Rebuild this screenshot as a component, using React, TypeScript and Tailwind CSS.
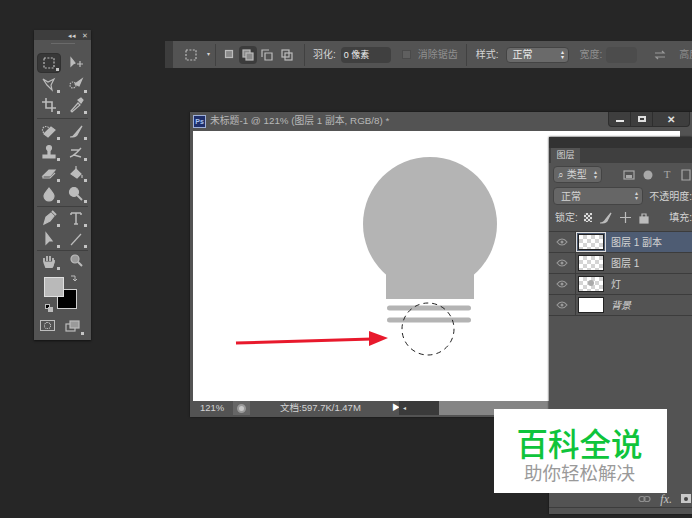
import type { ReactNode } from "react"

const cjk = "font-['Liberation_Sans','Noto_Sans_CJK_SC',sans-serif]"

const Ico = ({ children, w = 16, h = 16 }: { children: ReactNode; w?: number; h?: number }) => (
  <svg width={w} height={h} viewBox={`0 0 ${w} ${h}`} fill="none" stroke="#bcbcbc" strokeWidth="1.2">
    {children}
  </svg>
)

// one cell of the tool palette, corner = the little flyout triangle
const Tool = ({ children, active, corner = true }: { children: ReactNode; active?: boolean; corner?: boolean }) => (
  <div className={`relative w-[24px] h-[20px] flex items-center justify-center rounded-sm ${active ? "bg-[#383838] border border-[#303030]" : ""}`}>
    <Ico>{children}</Ico>
    {corner && <div className="absolute right-[1px] bottom-[1px] w-[3px] h-[3px] bg-[#c4c4c4]" />}
  </div>
)

const Row = ({ children }: { children: ReactNode }) => (
  <div className="flex justify-between px-[3px] mb-[1px]">{children}</div>
)

const Toolbox = () => (
  <div className="absolute left-[34px] top-[30px] w-[57px] h-[310px] bg-[#535353] shadow-[0_1px_2px_#111] flex flex-col">
    <div className="h-[10px] bg-[#3d3d3d] flex justify-end items-center gap-[6px] pr-[3px] text-[#cfcfcf] text-[7px] leading-none">
      <span>◂◂</span>
      <span>✕</span>
    </div>
    <div className="h-px w-[24px] bg-[#6a6a6a] mx-auto mt-[3px] mb-[9px]" />
    <Row>
      <Tool active><rect x="3" y="3" width="10" height="10" strokeDasharray="2 1.4" /></Tool>
      <Tool corner={false}><path d="M3 3v8l2-2 2-1z" fill="#bcbcbc" /><path d="M9 9h6M12 6v6" /></Tool>
    </Row>
    <Row>
      <Tool><path d="M2 3l5 3 6-3-3 6 1 5-5-5z" /></Tool>
      <Tool><circle cx="5" cy="9" r="3" strokeDasharray="1.5 1" /><path d="M7 8l7-5-3 7z" fill="#bcbcbc" /></Tool>
    </Row>
    <Row>
      <Tool><path d="M5 1v10h10M1 5h10v10" strokeWidth="1.6" /></Tool>
      <Tool><path d="M3 14l7-8 2 2-8 7z" /><path d="M10 3l3 3 2-3-2-2z" fill="#bcbcbc" /></Tool>
    </Row>
    <div className="h-px bg-[#3f3f3f] mx-[3px] my-[2px]" />
    <Row>
      <Tool><path d="M3 11l7-7 4 3-7 7z" fill="#bcbcbc" /><circle cx="5" cy="7" r="3.5" strokeDasharray="1.5 1" /></Tool>
      <Tool><path d="M2 14c3 0 4-1 5-3l7-8-5 9c-2 2-4 2-7 2z" fill="#bcbcbc" /></Tool>
    </Row>
    <Row>
      <Tool><circle cx="8" cy="4" r="2.5" fill="#bcbcbc" /><path d="M7 6h2v4H7zM2 11h12v3H2z" fill="#bcbcbc" /></Tool>
      <Tool><path d="M2 13c3-1 5-2 11-9M3 6h8M6 11l7 2" strokeWidth="1.4" /></Tool>
    </Row>
    <Row>
      <Tool><path d="M2 11l6-6h6l-5 6z" fill="#bcbcbc" /><path d="M2 11v2h7l5-5" /></Tool>
      <Tool><path d="M3 9l5-5 5 5-4 4z" fill="#bcbcbc" /><path d="M8 4V1M14 10v3" /></Tool>
    </Row>
    <Row>
      <Tool><path d="M8 2c3 4 5 6 5 8a5 5 0 0 1-10 0c0-2 2-4 5-8z" fill="#bcbcbc" /></Tool>
      <Tool><circle cx="6" cy="6" r="4.5" fill="#bcbcbc" /><path d="M9 9l5 5" strokeWidth="2" /></Tool>
    </Row>
    <div className="h-px bg-[#3f3f3f] mx-[3px] my-[1px]" />
    <Row>
      <Tool><path d="M3 14l2-7 5-4 3 3-4 5z" fill="#bcbcbc" /><path d="M11 1l4 4" strokeWidth="2" /></Tool>
      <Tool><path d="M3 3h10M8 3v11M6 14h4M3 3v2M13 3v2" strokeWidth="1.5" /></Tool>
    </Row>
    <Row>
      <Tool><path d="M5 2v11l3-3 3 0z" fill="#bcbcbc" /></Tool>
      <Tool><path d="M3 14L13 3" /></Tool>
    </Row>
    <div className="h-px bg-[#3f3f3f] mx-[3px]" />
    <Row>
      <Tool><path d="M3 9V5M6 8V3M9 8V3M12 9V5M3 9l2 5h6l2-5V7" strokeWidth="1.8" /><path d="M4 9h8v4H5z" fill="#bcbcbc" /></Tool>
      <Tool corner={false}><circle cx="7" cy="6" r="4" fill="#9a9a9a" /><path d="M10 9l4 4" strokeWidth="2" /></Tool>
    </Row>
    <div className="relative h-[39px] shrink-0 ml-[10px] mt-[5px]">
      <div className="absolute left-[25px] top-[-3px]">
        <Ico w={10} h={10}><path d="M2 2h4v5M4 5l2 2 2-2" strokeWidth="1" /></Ico>
      </div>
      <div className="absolute left-[13px] top-[12px] w-[20px] h-[20px] bg-black border border-[#d0d0d0]" />
      <div className="absolute left-0 top-0 w-[20px] h-[20px] bg-[#b9b9b9] border border-[#e0e0e0]" />
      <div className="absolute left-[1px] top-[27px] w-[5px] h-[5px] bg-black border border-[#bbb]" />
      <div className="absolute left-[4px] top-[30px] w-[5px] h-[5px] bg-[#bbb]" />
    </div>
    <div className="flex justify-between px-[6px]">
      <div className="w-[15px] h-[11px] mt-[4px] border border-[#bdbdbd] flex items-center justify-center">
        <div className="w-[7px] h-[7px] rounded-full border border-dotted border-[#ddd]" />
      </div>
      <Tool><rect x="1" y="6" width="9" height="7" /><rect x="5" y="3" width="9" height="7" fill="#9a9a9a" /></Tool>
    </div>
  </div>
)

const OptionsBar = () => (
  <div className={`absolute left-[165px] top-[41px] w-[527px] h-[27px] flex overflow-hidden bg-[#535353] text-[10px] text-[#d4d4d4] ${cjk}`}>
    <div className="w-[8px] shrink-0 bg-[#3d3d3d]" />
    <div className="flex items-center flex-1 min-w-0 whitespace-nowrap [&>*]:shrink-0">
      <div className="ml-[12px]"><Ico w={12} h={12}><rect x="1" y="1" width="10" height="10" strokeDasharray="2 1.4" /></Ico></div>
      <span className="text-[6px] ml-[10px]">▾</span>
      <div className="w-px h-[22px] bg-[#414141] ml-[5px]" />
      <div className="ml-[8px]"><Ico w={11} h={11}><rect x="1.5" y="1.5" width="7" height="7" fill="#8a8a8a" /></Ico></div>
      <div className="ml-[4px] w-[18px] h-[18px] bg-[#3c3c3c] rounded-sm flex items-center justify-center">
        <Ico w={12} h={12}><rect x="1" y="1" width="7" height="7" fill="#8a8a8a" /><rect x="4" y="4" width="7" height="7" fill="#8a8a8a" /></Ico>
      </div>
      <div className="ml-[4px]"><Ico w={12} h={12}><path d="M1 8V1h7M4 4h7v7H4z" /></Ico></div>
      <div className="ml-[8px]"><Ico w={12} h={12}><rect x="1" y="1" width="7" height="7" /><rect x="4" y="4" width="7" height="7" /></Ico></div>
      <div className="w-px h-[22px] bg-[#414141] ml-[11px]" />
      <span className="ml-[8px]">羽化:</span>
      <div className="ml-[5px] w-[50px] h-[16px] bg-[#404040] rounded-sm px-[3px] leading-[16px] text-[9px] text-[#ececec]">0 像素</div>
      <div className="ml-[11px] w-[9px] h-[9px] bg-[#5f5f5f] border border-[#4a4a4a]" />
      <span className="ml-[7px] text-[#8f8f8f]">消除锯齿</span>
      <div className="w-px h-[22px] bg-[#414141] ml-[8px]" />
      <span className="ml-[9px]">样式:</span>
      <div className="ml-[7px] w-[63px] h-[16px] bg-[#6a6a6a] border border-[#444] rounded-sm pl-[6px] pr-[4px] flex justify-between items-center text-[#ececec]">
        <span>正常</span>
        <span className="text-[6px] leading-[5px] text-center">▴<br />▾</span>
      </div>
      <span className="ml-[11px] text-[#8f8f8f]">宽度:</span>
      <div className="ml-[4px] w-[31px] h-[16px] bg-[#4c4c4c] rounded-sm" />
      <div className="ml-[17px]"><Ico w={12} h={12}><path d="M1 4h9l-2-2M11 8H2l2 2" stroke="#9a9a9a" /></Ico></div>
      <span className="ml-[13px] text-[#8f8f8f]">高度:</span>
    </div>
  </div>
)

const DocWindow = () => (
  <div className={`absolute left-[190px] top-[112px] w-[502px] h-[305px] bg-[#535353] flex flex-col shadow-[0_0_2px_#111] ${cjk}`}>
    <div className="h-[19px] flex items-center pl-[3px] relative">
      <div className="w-[13px] h-[13px] bg-[#1f2f6b] border border-[#9fb0d8] text-[#a9c4f0] text-[7px] font-bold leading-[11px] text-center">Ps</div>
      <span className="ml-[4px] text-[9.8px] text-[#b8b8b8]">未标题-1 @ 121% (图层 1 副本, RGB/8) *</span>
      <div className="absolute right-[2px] top-0 h-[15px] flex bg-[#3e3e3e] border-x border-b border-[#2e2e2e] rounded-b-sm">
        <div className="w-[22px] flex items-center justify-center border-r border-[#2e2e2e]"><div className="w-[8px] h-[2px] mt-[4px] bg-[#e8e8e8]" /></div>
        <div className="w-[22px] flex items-center justify-center border-r border-[#2e2e2e]"><div className="w-[8px] h-[6px] border-2 border-[#e0e0e0]" /></div>
        <div className="w-[36px] flex items-center justify-center text-[#e0e0e0] text-[10px] font-bold">✕</div>
      </div>
    </div>
    <div className="ml-[3px] w-[487px] h-[270px] bg-white">
      {/* the artwork, page coordinates */}
      <svg width="487" height="270" viewBox="193 131 487 270">
        <circle cx="430" cy="224" r="67" fill="#b4b4b4" />
        <rect x="386" y="270" width="88" height="29" fill="#b4b4b4" />
        <rect x="387" y="305.500" width="84" height="5" rx="2.500" fill="#b4b4b4" />
        <rect x="387" y="317.500" width="84" height="5" rx="2.500" fill="#b4b4b4" />
        <circle cx="428" cy="329" r="26" fill="none" stroke="#222" strokeDasharray="5 4" />
        <path d="M236 343L372 339" stroke="#e8192c" strokeWidth="3" />
        <path d="M369 331L388 338 369 346z" fill="#e8192c" />
      </svg>
    </div>
    <div className="h-[14px] ml-[3px] flex items-center text-[9.500px] text-[#d4d4d4] relative">
      <span className="ml-[7px] w-[33px]">121%</span>
      <div className="w-[17px] h-full bg-[#666] flex items-center justify-center">
        <div className="w-[9px] h-[9px] rounded-full bg-[#c8c8c8] border-2 border-[#999]" />
      </div>
      <span className="ml-[30px] w-[112px] whitespace-nowrap">文档:597.7K/1.47M</span>
      <span className="text-[8px] text-white w-[6px]">▶</span>
      <div className="ml-[1px] flex-1 h-full bg-[#3a3a3a] flex items-center">
        <span className="ml-[4px] text-[6px] text-[#ddd] w-[36px]">◂</span>
        <div className="w-[240px] h-full bg-[#858585]" />
      </div>
    </div>
  </div>
)

const Layer = ({ name, selected, thumb, italic }: { name: string; selected?: boolean; thumb: ReactNode; italic?: boolean }) => (
  <div className={`h-[21px] flex items-center border-b border-[#3c3c3c] ${selected ? "bg-[#4e5c73]" : ""}`}>
    <div className="w-[27px] h-full flex items-center justify-center border-r border-[#3c3c3c] bg-[#535353]">
      <Ico w={12} h={10}><path d="M1 5c3-4 7-4 10 0-3 4-7 4-10 0z" stroke="#9a9a9a" /><circle cx="6" cy="5" r="1.5" fill="#9a9a9a" stroke="none" /></Ico>
    </div>
    <div className={`ml-[2px] w-[26px] h-[16px] ${selected ? "outline outline-1 outline-[#ddd] outline-offset-1" : ""}`}>{thumb}</div>
    <span className={`ml-[7px] text-[10px] text-[#d4d4d4] ${italic ? "italic" : ""}`}>{name}</span>
  </div>
)

const Checker = ({ dot }: { dot?: boolean }) => (
  <div className="relative w-full h-full border border-[#222] bg-[repeating-conic-gradient(#d4d4d4_0_25%,#ffffff_0_50%)] bg-[length:8px_8px]">
    {dot && <div className="absolute left-[9px] top-[3px] w-[6px] h-[6px] rounded-full bg-[#aaa]" />}
  </div>
)

const LayersPanel = () => (
  <div className={`absolute left-[549px] top-[137px] w-[143px] h-[377px] bg-[#535353] flex flex-col shadow-[0_0_2px_#111] text-[10px] text-[#d4d4d4] whitespace-nowrap ${cjk}`}>
    <div className="h-[11px] bg-[#323232]" />
    <div className="h-[15px] bg-[#3f3f3f] pl-[2px]">
      <div className="w-[29px] h-full bg-[#535353] text-center leading-[15px] text-[9px]">图层</div>
    </div>
    <div className="flex items-center mt-[3px] ml-[4px] h-[17px]">
      <div className="w-[57px] h-full bg-[#666] border border-[#444] rounded-sm flex items-center justify-between px-[4px]">
        <span>⌕ 类型</span>
        <span className="text-[6px] leading-[5px] text-center">▴<br />▾</span>
      </div>
      <div className="ml-[21px] flex gap-[7px] items-center text-[#a8a8a8]">
        <Ico w={12} h={12}><rect x="1" y="2" width="10" height="8" stroke="#a8a8a8" /><rect x="3" y="6" width="6" height="3" fill="#a8a8a8" stroke="none" /></Ico>
        <Ico w={12} h={12}><circle cx="6" cy="6" r="4.5" fill="#a8a8a8" stroke="none" /></Ico>
        <span className="w-[12px] text-center font-['Liberation_Serif',serif] text-[11px] leading-none">T</span>
        <Ico w={12} h={12}><path d="M2 1h8v10H2z" stroke="#a8a8a8" /></Ico>
      </div>
    </div>
    <div className="flex items-center mt-[4px] ml-[4px] h-[18px]">
      <div className="w-[94px] h-full bg-[#666] border border-[#444] rounded-sm flex items-center justify-between pl-[7px] pr-[4px]">
        <span>正常</span>
        <span className="text-[6px] leading-[5px] text-center">▴<br />▾</span>
      </div>
      <span className="ml-[6px]">不透明度:</span>
    </div>
    <div className="flex items-center mt-[3px] ml-[6px] h-[19px]">
      <span>锁定:</span>
      <div className="ml-[6px] w-[9px] h-[9px] bg-[repeating-conic-gradient(#dcdcdc_0_25%,#666_0_50%)] bg-[length:4px_4px]" />
      <div className="ml-[7px]"><Ico w={13} h={13}><path d="M1 12c3 0 5-2 6-4l5-6-4 8c-2 2-4 2-7 2z" fill="#bcbcbc" /></Ico></div>
      <div className="ml-[7px]"><Ico w={13} h={13}><path d="M6.500 1v11M1 6.500h11" /></Ico></div>
      <div className="ml-[6px]"><Ico w={12} h={13}><rect x="2" y="6" width="8" height="6" fill="#bcbcbc" /><path d="M4 6V3h4v3" /></Ico></div>
      <span className="ml-[19px]">填充:</span>
    </div>
    <div className="mt-[4px] border-t border-[#3c3c3c]">
      <Layer name="图层 1 副本" selected thumb={<Checker />} />
      <Layer name="图层 1" thumb={<Checker />} />
      <Layer name="灯" thumb={<Checker dot />} />
      <Layer name="背景" italic thumb={<div className="w-full h-full bg-white border border-[#222]" />} />
    </div>
    <div className="flex-1" />
    <div className="h-[18px] flex items-center justify-end gap-[9px] pr-[1px] border-b border-[#3c3c3c]">
      <Ico w={13} h={8}><rect x="1" y="1.500" width="6" height="5" rx="2.500" stroke="#8f8f8f" /><rect x="6" y="1.500" width="6" height="5" rx="2.500" stroke="#8f8f8f" /></Ico>
      <span className="font-['Liberation_Serif',serif] italic text-[12px] text-[#c4c4c4]">fx.</span>
      <div className="w-[10px] h-[9px] bg-[#c8c8c8] flex items-center justify-center"><div className="w-[4px] h-[4px] rounded-full bg-[#444]" /></div>
    </div>
    <div className="h-[6px]" />
  </div>
)

export default function App() {
  return (
    <div className="relative w-[692px] h-[518px] overflow-hidden bg-[#262626]">
      <Toolbox />
      <OptionsBar />
      <DocWindow />
      <LayersPanel />
      <div className="absolute left-[494px] top-[409px] w-[173px] h-[84px] bg-white flex flex-col items-center pt-[14px] pr-[2px] font-['Noto_Sans_CJK_SC',sans-serif]">
        <div className="text-[31.500px] leading-[38px] font-medium text-[#0fc43b]">百科全说</div>
        <div className="text-[18.500px] leading-[23px] text-[#9a9a9a]">助你轻松解决</div>
      </div>
    </div>
  )
}
